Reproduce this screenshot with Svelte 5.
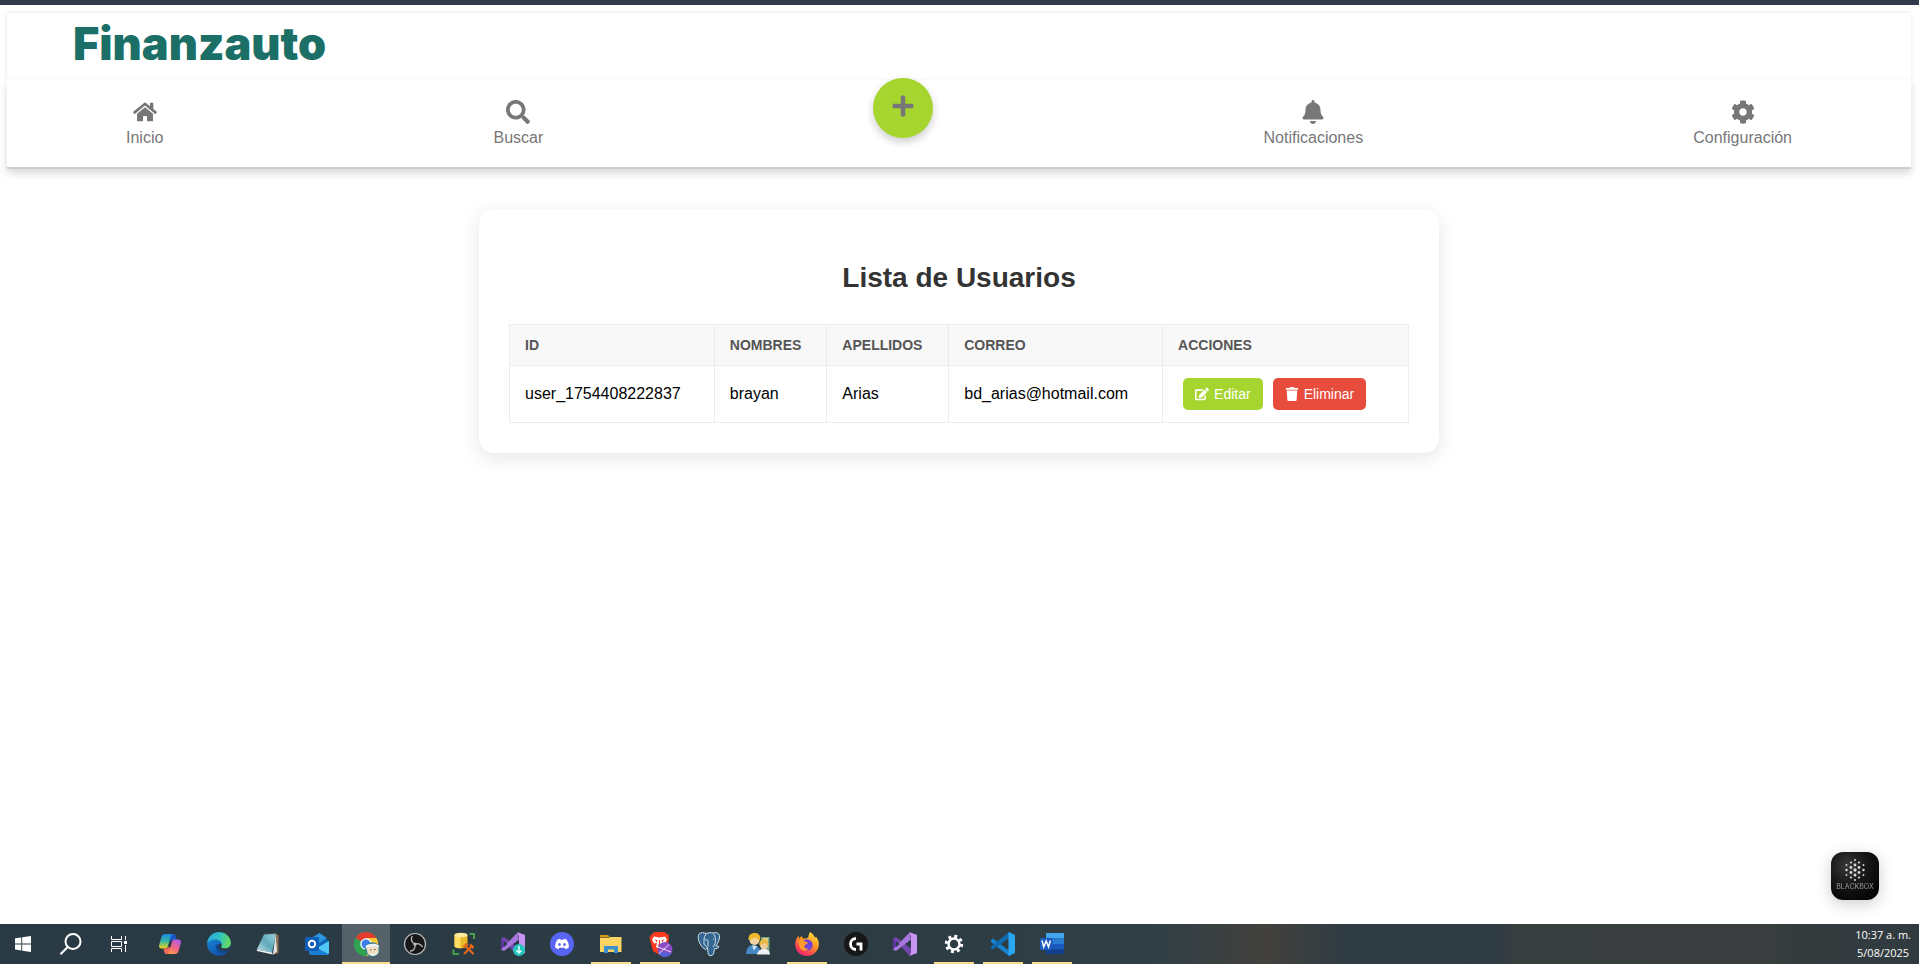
<script>
  const apps = [
    { id: 'copilot', label: 'Copilot' },
    { id: 'edge', label: 'Edge' },
    { id: 'notepad', label: 'Notepad' },
    { id: 'outlook', label: 'Outlook' },
    { id: 'chrome', label: 'Chrome', active: true },
    { id: 'obs', label: 'OBS' },
    { id: 'sql', label: 'SQL' },
    { id: 'vsi', label: 'Visual Studio Installer' },
    { id: 'discord', label: 'Discord' },
    { id: 'files', label: 'Explorer', open: true },
    { id: 'brave', label: 'Brave', open: true },
    { id: 'pg', label: 'PostgreSQL' },
    { id: 'people', label: 'People' },
    { id: 'firefox', label: 'Firefox', open: true },
    { id: 'ghub', label: 'G Hub' },
    { id: 'vs', label: 'Visual Studio' },
    { id: 'settings', label: 'Settings', open: true },
    { id: 'code', label: 'Code', open: true },
    { id: 'word', label: 'Word', open: true }
  ];
  const users = [
    { id: 'user_1754408222837', nombres: 'brayan', apellidos: 'Arias', correo: 'bd_arias@hotmail.com' }
  ];
  const dots = [
    [24, 8, 1], [20, 10.5, 1.1], [28, 10.5, 1.1], [15.5, 13, 0.9], [24, 13, 1.4], [32.5, 13, 0.9],
    [20, 15.5, 1.4], [28, 15.5, 1.4], [15.5, 18, 1.2], [24, 18, 1.7], [32.5, 18, 1.2],
    [20, 20.5, 1.4], [28, 20.5, 1.4], [15.5, 23, 0.9], [24, 23, 1.5], [32.5, 23, 0.9],
    [20, 25.5, 1.1], [28, 25.5, 1.1], [24, 28, 1]
  ];
</script>

<div class="page">
  <div class="strip"></div>
  <header class="brand"><span class="logo">Finanzauto</span></header>
  <nav class="nav">
    <a class="item" href="#inicio">
      <svg class="ico" viewBox="0 0 576 512"><path d="M280.37 148.26L96 300.11V464a16 16 0 0 0 16 16l112.06-.29a16 16 0 0 0 15.92-16V368a16 16 0 0 1 16-16h64a16 16 0 0 1 16 16v95.64a16 16 0 0 0 16 16.05L464 480a16 16 0 0 0 16-16V300L295.67 148.26a12.19 12.19 0 0 0-15.3 0zM571.6 251.47L488 182.56V44.05a12 12 0 0 0-12-12h-56a12 12 0 0 0-12 12v72.61L318.47 43a48 48 0 0 0-61 0L4.34 251.47a12 12 0 0 0-1.6 16.9l25.5 31A12 12 0 0 0 45.15 301l235.22-193.74a12.19 12.19 0 0 1 15.3 0L530.9 301a12 12 0 0 0 16.9-1.6l25.5-31a12 12 0 0 0-1.7-16.93z" /></svg>
      <span>Inicio</span>
    </a>
    <a class="item" href="#buscar">
      <svg class="ico" viewBox="0 0 512 512"><path d="M505 442.7L405.3 343c-4.5-4.5-10.6-7-17-7H372c27.6-35.3 44-79.7 44-128C416 93.1 322.9 0 208 0S0 93.1 0 208s93.1 208 208 208c48.3 0 92.7-16.4 128-44v16.3c0 6.4 2.5 12.5 7 17l99.7 99.7c9.4 9.4 24.6 9.4 33.9 0l28.3-28.3c9.4-9.4 9.4-24.6.1-34zM208 336c-70.7 0-128-57.2-128-128 0-70.7 57.2-128 128-128 70.7 0 128 57.2 128 128 0 70.7-57.2 128-128 128z" /></svg>
      <span>Buscar</span>
    </a>
    <button class="add" aria-label="Agregar">
      <svg class="ico" viewBox="0 0 448 512"><path d="M416 208H272V64c0-17.67-14.33-32-32-32h-32c-17.67 0-32 14.33-32 32v144H32c-17.67 0-32 14.33-32 32v32c0 17.67 14.33 32 32 32h144v144c0 17.67 14.33 32 32 32h32c17.67 0 32-14.33 32-32V304h144c17.67 0 32-14.33 32-32v-32c0-17.67-14.33-32-32-32z" /></svg>
    </button>
    <a class="item" href="#notificaciones">
      <svg class="ico" viewBox="0 0 448 512"><path d="M224 512c35.32 0 63.97-28.65 63.97-64H160.03c0 35.35 28.65 64 63.97 64zm215.39-149.71c-19.32-20.76-55.47-51.99-55.47-154.29 0-77.7-54.48-139.9-127.94-155.16V32c0-17.67-14.32-32-31.98-32s-31.98 14.33-31.98 32v20.84C118.56 68.1 64.08 130.3 64.08 208c0 102.3-36.15 133.53-55.47 154.29-6 6.45-8.66 14.16-8.61 21.71.11 16.4 12.98 32 32.1 32h383.8c19.12 0 32-15.6 32.1-32 .05-7.55-2.61-15.27-8.61-21.71z" /></svg>
      <span>Notificaciones</span>
    </a>
    <a class="item" href="#configuracion">
      <svg class="ico" viewBox="0 0 512 512"><path d="M487.4 315.7l-42.6-24.6c4.3-23.2 4.3-47 0-70.2l42.6-24.6c4.9-2.8 7.1-8.6 5.5-14-11.1-35.6-30-67.8-54.7-94.6-3.8-4.1-10-5.1-14.8-2.3L380.8 110c-17.9-15.4-38.5-27.3-60.8-35.1V25.800c0-5.600-3.900-10.500-9.400-11.700-36.700-8.200-74.300-7.800-109.200 0-5.500 1.200-9.400 6.100-9.400 11.700V75c-22.200 7.900-42.800 19.800-60.800 35.100L88.700 85.500c-4.900-2.800-11-1.900-14.800 2.300-24.700 26.700-43.600 58.900-54.700 94.600-1.700 5.400.6 11.200 5.500 14L67.300 221c-4.300 23.200-4.300 47 0 70.2l-42.6 24.6c-4.9 2.800-7.1 8.600-5.500 14 11.100 35.600 30 67.800 54.700 94.600 3.800 4.100 10 5.100 14.800 2.300l42.600-24.600c17.900 15.400 38.500 27.300 60.800 35.100v49.200c0 5.600 3.900 10.500 9.400 11.700 36.700 8.200 74.300 7.800 109.200 0 5.500-1.200 9.400-6.100 9.400-11.700v-49.200c22.200-7.900 42.800-19.800 60.800-35.100l42.600 24.600c4.900 2.800 11 1.900 14.800-2.300 24.700-26.700 43.600-58.900 54.700-94.600 1.500-5.500-.7-11.300-5.600-14.100zM256 336c-44.100 0-80-35.900-80-80s35.900-80 80-80 80 35.900 80 80-35.900 80-80 80z" /></svg>
      <span>Configuración</span>
    </a>
  </nav>

  <main>
    <section class="card">
      <h2>Lista de Usuarios</h2>
      <table>
        <thead><tr><th>ID</th><th>NOMBRES</th><th>APELLIDOS</th><th>CORREO</th><th>ACCIONES</th></tr></thead>
        <tbody>
          {#each users as u}
            <tr>
              <td>{u.id}</td><td>{u.nombres}</td><td>{u.apellidos}</td><td>{u.correo}</td>
              <td>
                <div class="actions">
                  <button class="btn edit">
                    <svg viewBox="0 0 576 512"><path d="M402.600 83.200l90.200 90.200c3.800 3.800 3.800 10 0 13.800L274.400 405.600l-92.800 10.300c-12.400 1.400-22.900-9.100-21.500-21.500l10.300-92.800L388.800 83.200c3.800-3.800 10-3.800 13.800 0zm162-22.900l-48.800-48.800c-15.200-15.200-39.900-15.200-55.200 0l-35.400 35.400c-3.800 3.800-3.800 10 0 13.800l90.200 90.200c3.800 3.800 10 3.800 13.800 0l35.400-35.400c15.200-15.300 15.200-40 0-55.200zM384 346.200V448H64V128h229.800c3.200 0 6.200-1.300 8.500-3.500l40-40c7.600-7.600 2.200-20.500-8.500-20.500H48C21.500 64 0 85.500 0 112v352c0 26.500 21.500 48 48 48h352c26.500 0 48-21.500 48-48V306.200c0-10.700-12.900-16-20.500-8.500l-40 40c-2.200 2.300-3.500 5.300-3.500 8.500z" /></svg>
                    Editar
                  </button>
                  <button class="btn del">
                    <svg viewBox="0 0 448 512"><path d="M432 32H312l-9.400-18.700A24 24 0 0 0 281.100 0H166.800a23.720 23.720 0 0 0-21.400 13.300L136 32H16A16 16 0 0 0 0 48v32a16 16 0 0 0 16 16h416a16 16 0 0 0 16-16V48a16 16 0 0 0-16-16zM53.200 467a48 48 0 0 0 47.900 45h245.800a48 48 0 0 0 47.900-45L416 128H32z" /></svg>
                    Eliminar
                  </button>
                </div>
              </td>
            </tr>
          {/each}
        </tbody>
      </table>
    </section>
  </main>

  <button class="blackbox" aria-label="Blackbox">
    <svg viewBox="0 0 48 48">
      <defs>
        <radialGradient id="bb" cx="0.35" cy="0.3" r="0.8"><stop offset="0" stop-color="#3a3a3a" /><stop offset="0.5" stop-color="#161616" /><stop offset="1" stop-color="#050505" /></radialGradient>
      </defs>
      <rect width="48" height="48" rx="12" fill="url(#bb)" />
      {#each dots as [x, y, r]}<circle cx={x} cy={y} {r} fill="#d8d8d8" />{/each}
      <text x="24" y="37" text-anchor="middle" font-size="7" fill="#9a9a9a" font-family="Inter, sans-serif">BLACKBOX</text>
    </svg>
  </button>

  <footer class="taskbar">
    <div class="system">
      <button class="sys" aria-label="Inicio de Windows">
        <svg viewBox="0 0 24 24"><path fill="#fff" d="M4 6.300l6.300-.8v6H4zM11.200 5.300L20 4v7.500h-8.800zM4 12.400h6.300v6L4 17.600zM11.200 12.400H20V20l-8.800-1.300z" /></svg>
      </button>
      <button class="sys" aria-label="Buscar en Windows">
        <svg viewBox="0 0 24 24"><g fill="none" stroke="#fff" stroke-width="2"><circle cx="14" cy="9.500" r="7.500" /><path d="M8.700 15L1.500 22.300" /></g></svg>
      </button>
      <button class="sys" aria-label="Vista de tareas">
        <svg viewBox="0 0 24 24"><g fill="none" stroke="#fff" stroke-width="1"><path d="M4.500 4v3.500h10V4M4.500 20v-3.500h10V20M4.500 9.500h10v5h-10zM18.500 4v4M18.500 13v7" /></g><path fill="#fff" d="M17 9h3v3h-3z" /></svg>
      </button>
    </div>
    <div class="apps">
      {#each apps as app}
        <button class="app" class:active={app.active} class:open={app.open} aria-label={app.label}>
          <svg viewBox="0 0 24 24">
            {#if app.id === 'copilot'}
              <defs>
                <linearGradient id="c1" x1="0" y1="0" x2="0" y2="1"><stop offset="0" stop-color="#1c8be8" /><stop offset="0.5" stop-color="#35b8a0" /><stop offset="1" stop-color="#f3d01c" /></linearGradient>
                <linearGradient id="c2" x1="0.8" y1="0" x2="0.2" y2="1"><stop offset="0" stop-color="#a95de8" /><stop offset="0.5" stop-color="#f0648a" /><stop offset="1" stop-color="#ff9a45" /></linearGradient>
              </defs>
              <path fill="#1b54c8" d="M10 2h5.500c1.500 0 2 1 2.500 3l.8 3H16c-2 0-2.500.8-3 2.500z" />
              <path fill="url(#c1)" d="M7 2h8c-1.500.3-2 1.500-2.500 3.500L10 14c-.6 1.900-1.500 2.500-3 2.500H3.500C1.500 16.500.6 15 1.200 12.800L3.500 5C4.100 3 5 2 7 2z" />
              <path fill="#ef6b58" d="M14 22H8.500c-1.500 0-2-1-2.500-3l-.6-2.500H8c2 0 2.500-1 3-2.500z" />
              <path fill="url(#c2)" d="M17 22H9c1.500-.3 2-1.500 2.500-3.500L14 10c.6-1.900 1.500-2.500 3-2.500h3.500c2 0 2.900 1.500 2.300 3.700L20.500 19c-.6 2-1.500 3-3.500 3z" />
            {:else if app.id === 'edge'}
              <defs>
                <linearGradient id="e1" x1="0" y1="0.3" x2="1" y2="0.5"><stop offset="0" stop-color="#2aa5df" /><stop offset="0.5" stop-color="#31c4c4" /><stop offset="1" stop-color="#67dc58" /></linearGradient>
                <linearGradient id="e2" x1="0" y1="0" x2="0.6" y2="1"><stop offset="0" stop-color="#1d90df" /><stop offset="1" stop-color="#1050a8" /></linearGradient>
              </defs>
              <circle cx="12" cy="12" r="11.800" fill="url(#e2)" />
              <path fill="#0d4a91" d="M9 12c-1.500 5 2.500 9.500 7 9.200 3-.2 5-1.500 6.300-3.200-5 2.500-10.500 0-10.700-4.500z" />
              <path fill="url(#e1)" d="M.2 11.500C.7 5 5.500.2 12 .2c7 0 11.800 5 11.800 10.300 0 4.200-3 6-6 6-3.300 0-4.300-1.300-3.600-2.300C16 11.500 13.500 7.500 8.700 7.500 4.500 7.500 1.500 9.500.2 11.500z" />
              <path fill="#2a3a44" d="M14.200 14.200c-.7 1 .3 2.300 3.600 2.300 2.500 0 4.500-.8 5.500-2.500l-.8 4c-5 2.500-10 .5-11-3-.5-2 .5-3 1.500-3.200 1.500-.3 2 1.200 1.200 2.400z" />
            {:else if app.id === 'notepad'}
              <defs><linearGradient id="n1" x1="1" y1="0" x2="0" y2="1"><stop offset="0" stop-color="#9ed4de" /><stop offset="0.5" stop-color="#5fa9ba" /><stop offset="1" stop-color="#c5e4ea" /></linearGradient></defs>
              <path fill="#8d7352" d="M20 2l2.500 1v18l-5 1.500z" />
              <path fill="#dfe7e9" d="M19.500 2l1.500 17.500-4 3.200z" />
              <path fill="url(#n1)" d="M8 2.500L20 1.500l-4 19L.8 17.500z" />
              <path fill="#f3f7f8" d="M.8 17.500L16 20.500l.8 2L1 19z" />
              <path stroke="#59676b" stroke-width="1.200" stroke-dasharray="1 1" d="M8 2h12.500" />
            {:else if app.id === 'outlook'}
              <path fill="#1266b8" d="M4 9L14 1.500 24 9v3l-8 6z" />
              <path fill="#2a96e0" d="M8 5l6.500-4L22 6l-8 5z" />
              <path fill="#50c8f5" d="M24 9v11.500c0 1.500-1 2.500-2.500 2.500H6l-1-3z" />
              <path fill="#1a7fd4" d="M4 12l19.500 10c-.5.700-1.200 1-2 1H6.500C5 23 4 22 4 20.500z" />
              <rect x="0" y="5" width="14" height="14" rx="1.500" fill="#0f5fb8" />
              <circle cx="7" cy="12" r="3.200" fill="none" stroke="#fff" stroke-width="1.900" />
            {:else if app.id === 'chrome'}
              <circle cx="12" cy="12" r="12" fill="#31a350" />
              <path fill="#e33b2e" d="M12 12L1.600 6A12 12 0 0 1 22.400 6z" />
              <path fill="#fcc934" d="M12 6h10.400A12 12 0 0 1 12 24l5-9z" />
              <path fill="#31a350" d="M1.600 6A12 12 0 0 0 12 24l5-9H7z" />
              <circle cx="12" cy="12" r="5.800" fill="#fff" /><circle cx="12" cy="12" r="4.500" fill="#3d7eea" />
              <circle cx="18.500" cy="17.500" r="7.300" fill="#327e91" />
              <path fill="#f0dfc1" d="M12.500 16c3-2.500 9-2.500 12-.5v5c-2 3-8 4-11 1z" />
              <path fill="#e9f2f4" d="M11.500 14c3-2.500 9-3 13-1l.7 2.500c-4-1.500-9-1.300-13 .8zM14 21c3 1.500 7 1.500 10 0-2 3.500-7.500 4.500-10 0z" />
              <path stroke="#5c4b3e" stroke-width="1" d="M16 18h1.500M20 17.500h1.500" />
            {:else if app.id === 'obs'}
              <circle cx="12" cy="12" r="10.500" fill="#171718" stroke="#b9bcbe" stroke-width="1.200" />
              <g fill="none" stroke="#b9bcbe" stroke-width="1.300" stroke-linecap="round">
                <path d="M9 4.500C7.500 7.500 9 11 12 12.200" />
                <path d="M19.300 14.500c-2-2.500-5-3.500-7.300-2.300" />
                <path d="M7.500 19c3 0 5-3 4.500-6.800" />
              </g>
              <circle cx="12" cy="12.200" r="1.600" fill="#b9bcbe" />
            {:else if app.id === 'sql'}
              <path fill="#e9b92c" d="M2.500 3v11c0 3 13 3 13 0V3z" /><path fill="#ffdc62" d="M2.500 3v11c0 1.500 3 2.300 6 2.300V3z" />
              <ellipse cx="9" cy="3" rx="6.500" ry="2.300" fill="#ffea9a" />
              <path fill="none" stroke="#43a047" stroke-width="2" d="M17.500 2H22v5M1.500 17.500V22H7" />
              <path stroke="#e4681b" stroke-width="2.200" d="M12 22l8-8M21.500 22L13.500 14" /><path stroke="#e4681b" stroke-width="2.500" d="M11.500 15.500l4-4M18 12.500l3.500 3.500" />
            {:else if app.id === 'vsi' || app.id === 'vs'}
              <path fill="#59369a" d="M0 6.500L3 5v14l-3-1.500z" />
              <path fill="#7146ad" d="M0 6.500L3 5l15 11.500V23l-1.500.5z" />
              <path fill="#a678dd" d="M3 19l-3-1.500L16.500.5 18 7.500z" />
              <path fill="#c995f4" d="M16.500 0L24 3v18l-7.500 3L18 21V5z" />
              <path fill="#2b3a44" d="M3 9v6l3.500-3zM18 8v8l-5-4z" />
              {#if app.id === 'vsi'}
                <circle cx="18" cy="18" r="6" fill="#24c6bb" /><path fill="none" stroke="#e7ffff" stroke-width="1.500" d="M18 14v7M15.500 18.500L18 21l2.500-2.500" />
              {/if}
            {:else if app.id === 'discord'}
              <circle cx="12" cy="12" r="12" fill="#5865f2" />
              <path fill="#fff" d="M7.500 7.500l2.500-.8.6 1h2.800l.6-1 2.500.8c1.800 2.500 2.600 5.200 2.300 8-1 .9-2.100 1.400-3.300 1.700l-.8-1.500H9.300l-.8 1.500c-1.200-.3-2.300-.8-3.300-1.700-.3-2.800.5-5.500 2.300-8z" />
              <ellipse cx="9.500" cy="12.500" rx="1.300" ry="1.500" fill="#5865f2" /><ellipse cx="14.500" cy="12.500" rx="1.300" ry="1.500" fill="#5865f2" />
            {:else if app.id === 'files'}
              <path fill="#d99a14" d="M1 3h8l2 2.500H1z" /><path fill="#fcd462" d="M1 6h9l1-1h11.500v15H1z" /><path fill="#3e8fd0" d="M5 14h14v7h-4v-3.500H9V21H5z" />
            {:else if app.id === 'brave'}
              <path fill="#fb3a1c" d="M6.500 0h10l2 2 2 .5.500 3.500-1 5-3 8-5.500 4L5 19 2 8l-.5-3L4 2z" />
              <path fill="#fff" d="M6 4.500l5.500 1 5.500-1 2 3-2 4-3-.5 1 4-3.500 2.500L8 15l1-4-3 .5-2-4z" />
              <path fill="#fb3a1c" d="M6.500 7l3 1.500-.5 2zM16.500 7l-3 1.500.5 2zM11 8h1v4l2 1.500h-5l2-1.500z" />
              <circle cx="17" cy="17.500" r="7.500" fill="#8b4bc4" /><path fill="#5661d9" d="M10 20a7.500 7.500 0 0 0 13.500 1z" /><path fill="none" stroke="#eadcf5" stroke-width="1" d="M10 15l13 5M11 21.500l10-9" />
            {:else if app.id === 'pg'}
              <path fill="#336791" stroke="#cfdde8" stroke-width="1" d="M2 2c2-2 5-1.500 7-.5C12 .5 14 .5 16 1c3-1 6 0 6.500 2.500.4 3-1 7-3.500 10.500 1.500.5 3 0 3 .8-.5 1.500-3 2-4.500 1.800-.5 3-.5 6-2.500 6.800-3 .8-4-.5-4-3l-.5-4.500c-1 1.500-2.500 2-3.500.5C3.500 14.500-.5 6 2 2z" />
              <path fill="none" stroke="#cfdde8" stroke-width="1" d="M9 2C6.500 5 7 9 7 12c1 2 3 2 3.500 4M16 1.500c3 3 3 8 1.500 11.500L16 15M8 8c2-1 3.500 0 3 2.500v4M16 7.500l1-.5" />
            {:else if app.id === 'people'}
              <path fill="#77a77e" d="M15 5h8.500v15H15z" /><path fill="#d9d38a" d="M17 6h5v4h-5z" />
              <path fill="#4589c6" d="M0 22c.5-6 3-9 7-9s7 2.500 8 9z" />
              <circle cx="8.500" cy="8" r="5" fill="#f4d4a0" />
              <path fill="#efb92c" d="M2.500 8c-.5-5 3-7.500 7-7 4 0 5.500 4 4.500 7.500-2-.5-3.500-1.500-4.500-3.500C8 7 5 7.500 2.500 8z" />
              <circle cx="18" cy="13" r="4" fill="#f0cc9a" />
              <path fill="#e8bb48" d="M13.200 13c0-4 2.500-6 5-5.700 3 .2 4.500 2.700 4.200 6-2 0-3-1-3.500-2-1.500 1-3.500 1.700-5.700 1.700z" />
              <path fill="#eef1f4" d="M11 22.500c1-4 3.500-5.500 7-5.500s5.500 1.500 6 5.500z" /><path fill="#d8e7f4" d="M6 13.500l2 5 3-4.500z" />
            {:else if app.id === 'firefox'}
              <defs><linearGradient id="f1" x1="0.8" y1="0" x2="0.2" y2="1"><stop offset="0" stop-color="#ffe63b" /><stop offset="0.4" stop-color="#ff9a22" /><stop offset="0.8" stop-color="#fb3a56" /><stop offset="1" stop-color="#e3208c" /></linearGradient></defs>
              <path fill="url(#f1)" d="M15 0c4 2.500 4.500 5 5 6l1-1.500C23.500 8 24 10 23.800 13 23.300 19.500 18 24 12 24S.3 19.500.2 12.500C.2 8.500 1.500 6 3.500 3.500L4 6.500 6.500 4 8 6.500c3 .2 5-.5 5.500-2C13.800 3 14 1 15 0z" />
              <circle cx="12" cy="13" r="5.700" fill="#7144d9" /><path fill="#ff9b2d" d="M3 9.500c2-2.500 5-2 7 0 1 1 3 .5 3 1.500s-3 1-3.500 3 1.500 3 4 2.500c-2 3.500-7 2.500-8.500-.5C4 14 4 11.500 3 9.500z" />
            {:else if app.id === 'ghub'}
              <circle cx="12" cy="12" r="12" fill="#171717" /><path fill="none" stroke="#fff" stroke-width="2.800" d="M12 6.500a5.500 5.500 0 1 0 0 11M12.500 12H17v6.500" />
            {:else if app.id === 'settings'}
              <circle cx="12" cy="12" r="5.500" fill="none" stroke="#fff" stroke-width="2.500" /><circle cx="12" cy="12" r="7.700" fill="none" stroke="#fff" stroke-width="3" stroke-dasharray="3 3.050" />
            {:else if app.id === 'code'}
              <path fill="#1684cf" d="M0 8l2-1.500 16 12V24L0 10z" /><path fill="#0f6bb0" d="M0 16l2 1.500L18 6V0L0 14.500z" /><path fill="#2aa7f3" d="M17.500 0L24 3v18l-6.500 3z" />
            {:else if app.id === 'word'}
              <path fill="#41a5ee" d="M6 1h18v5.500H6z" /><path fill="#2b7cd3" d="M6 6.500h18V12H6z" /><path fill="#185abd" d="M6 12h18v5.500H6z" /><path fill="#103f91" d="M6 17.500h18V22H6z" />
              <rect x="0" y="6" width="12.500" height="12" rx="1" fill="#1c5bbd" /><path fill="none" stroke="#fff" stroke-width="1.500" d="M2 8.500l1.700 6.500L6.200 9l2.300 6 1.900-6.500" />
            {/if}
          </svg>
        </button>
      {/each}
    </div>
    <div class="clock"><span>10:37 a. m.</span><span>5/08/2025</span></div>
  </footer>
</div>

<style>
  :global(body) { margin: 0; background: #fff; }
  .page { min-height: 100vh; display: flex; flex-direction: column; font-family: Arial, "Liberation Sans", sans-serif; font-size: 16px; }
  .strip { height: 5px; background: #323b4e; }
  button { font: inherit; border: 0; margin: 0; padding: 0; background: none; cursor: pointer; }
  svg { display: block; }
  .brand { margin: 8px 8px 0 7px; height: 67px; box-sizing: border-box; padding: 0 66px 5px; display: flex; align-items: center; background: #fff; box-shadow: 0 0 4px rgba(0, 0, 0, 0.1); }
  .logo { font-family: Inter, sans-serif; font-weight: 900; font-size: 45px; line-height: 48px; color: #1b6f67; }
  .nav { margin: 0 8px 0 7px; height: 87px; padding: 0 119px; display: flex; justify-content: space-between; align-items: center; background: #fff; border-bottom: 2px solid #cfcfcf; box-shadow: 0 4px 8px rgba(0, 0, 0, 0.16); }
  .item { display: flex; flex-direction: column; align-items: center; gap: 5px; color: #777; text-decoration: none; line-height: 18px; }
  .ico { width: 24px; height: 24px; fill: #777; }
  .add { width: 60px; height: 60px; box-sizing: border-box; border-radius: 50%; background: #a6d52f; display: grid; place-items: center; padding-bottom: 4px; margin-bottom: 31px; box-shadow: 0 4px 8px rgba(0, 0, 0, 0.2); }
  main { flex: 1; padding: 40px 21px 40px 20px; }
  .card { max-width: 900px; margin: 0 auto; padding: 30px; background: #fff; border-radius: 15px; box-shadow: 0 5px 20px rgba(0, 0, 0, 0.1); }
  h2 { margin: 22px 0 30px; text-align: center; font-size: 28px; line-height: 33px; color: #333; }
  table { width: 100%; border-collapse: collapse; }
  th, td { border: 1px solid #ececec; padding: 12px 15px; text-align: left; color: #000; }
  th { background: #f8f8f8; color: #555; font-size: 14px; line-height: 16px; }
  .actions { display: flex; gap: 10px; padding: 0 5px; }
  .btn { display: inline-flex; align-items: center; gap: 5px; padding: 8px 12px; border-radius: 5px; color: #fff; font-size: 14px; line-height: 16px; }
  .btn svg { width: 14px; height: 14px; fill: #fff; }
  .edit { background: #a6d52f; }
  .del { background: #e74c3c; }
  .blackbox { position: fixed; right: 40px; bottom: 64px; width: 48px; height: 48px; border-radius: 12px; box-shadow: 0 4px 16px rgba(0, 0, 0, 0.2); }
  .taskbar { height: 40px; display: flex; background: linear-gradient(90deg, #293a45 0%, #2d3c44 45%, #2f3f46 60%, #43413d 66%, #2f3c43 70%, #2e3b43 78%, #383e3e 79%, #3b3e3e 91%, #343b3d 94%, #303b40 100%); }
  .system { display: flex; width: 144px; margin-right: 2px; }
  .sys, .app { display: grid; place-items: center; height: 40px; width: 48px; }
  .system .sys { padding-right: 2px; }
  .sys svg, .app svg { width: 24px; height: 24px; }
  .app svg { overflow: visible; }
  .apps { display: flex; gap: 1px; flex: 1; }
  .app.active { background: #566269; box-shadow: inset 0 -2px #fbdc8b; }
  .app.open { background: linear-gradient(#fbdc8b, #fbdc8b) center bottom / 40px 2px no-repeat; }
  .clock { display: flex; flex-direction: column; align-items: center; padding: 2px 8px 0 0; color: #fff; font-family: "Open Sans", sans-serif; font-size: 11px; line-height: 18px; }
</style>
